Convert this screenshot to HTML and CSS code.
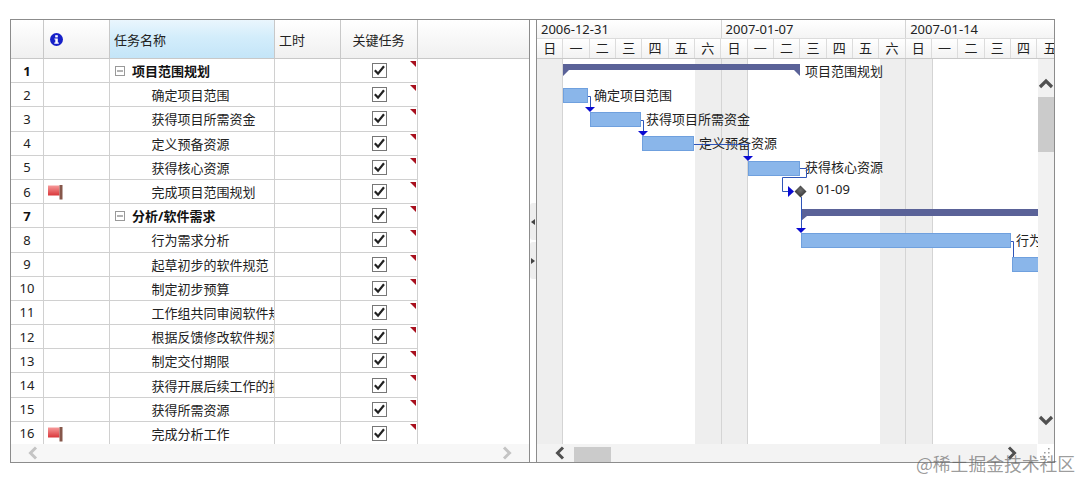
FILE: index.html
```html
<!DOCTYPE html>
<html lang="zh">
<head>
<meta charset="utf-8">
<title>甘特图</title>
<link rel="stylesheet" href="styles.css">
</head>
<body>
<svg class="defs" width="0" height="0" aria-hidden="true">
  <defs>
    <linearGradient id="flagfill" x1="0" y1="0" x2="0" y2="1"><stop offset="0" stop-color="#f79a9a"/><stop offset="1" stop-color="#d9363a"/></linearGradient>
    <radialGradient id="dia" cx="0.5" cy="0.4" r="0.6"><stop offset="0" stop-color="#707070"/><stop offset="1" stop-color="#303030"/></radialGradient>
    <symbol id="check" viewBox="0 0 15 15">
      <rect x="0.5" y="0.5" width="14" height="14" fill="#fff" stroke="#777"/>
      <path d="M2.8 7.3 6 10.6 12 3.2" fill="none" stroke="#222" stroke-width="2.2"/>
    </symbol>
    <symbol id="flag" viewBox="0 0 15 15">
      <rect x="0" y="0.5" width="11.5" height="10" fill="url(#flagfill)"/>
      <rect x="11.5" y="0" width="3" height="14.5" fill="#86574a"/>
    </symbol>
    <symbol id="minus" viewBox="0 0 10 10">
      <rect x="0.5" y="0.5" width="9" height="9" fill="#fff" stroke="#999"/>
      <path d="M2 5H8" stroke="#666"/>
    </symbol>
  </defs>
</svg>
<div class="frame">
  <section class="left">
    <div class="head">
      <div class="c num hc"></div>
      <div class="c ico hc info"><svg width="13" height="13" viewBox="0 0 13 13"><circle cx="6.5" cy="6.5" r="6.5" fill="#1620c8"/><rect x="5.2" y="2.2" width="2.6" height="2.2" fill="#fff"/><path d="M4.4 5.4H7.8V9.6H8.8V10.8H4.3V9.6H5.3V6.6H4.4Z" fill="#fff"/></svg></div>
      <div class="c name hc sel">任务名称</div>
      <div class="c hrs hc">工时</div>
      <div class="c crit hc">关键任务</div>
      <div class="hc blank"></div>
    </div>
    <div class="rows">
      <div class="row"><div class="c num b">1</div><div class="c ico"></div><div class="c name b"><svg class="tog" width="10" height="10"><use href="#minus"/></svg>项目范围规划</div><div class="c hrs"></div><div class="c crit"><svg class="cb" width="15" height="15"><use href="#check"/></svg><i class="tri"></i></div></div>
      <div class="row"><div class="c num">2</div><div class="c ico"></div><div class="c name kid">确定项目范围</div><div class="c hrs"></div><div class="c crit"><svg class="cb" width="15" height="15"><use href="#check"/></svg><i class="tri"></i></div></div>
      <div class="row"><div class="c num">3</div><div class="c ico"></div><div class="c name kid">获得项目所需资金</div><div class="c hrs"></div><div class="c crit"><svg class="cb" width="15" height="15"><use href="#check"/></svg><i class="tri"></i></div></div>
      <div class="row"><div class="c num">4</div><div class="c ico"></div><div class="c name kid">定义预备资源</div><div class="c hrs"></div><div class="c crit"><svg class="cb" width="15" height="15"><use href="#check"/></svg><i class="tri"></i></div></div>
      <div class="row"><div class="c num">5</div><div class="c ico"></div><div class="c name kid">获得核心资源</div><div class="c hrs"></div><div class="c crit"><svg class="cb" width="15" height="15"><use href="#check"/></svg><i class="tri"></i></div></div>
      <div class="row"><div class="c num">6</div><div class="c ico"><svg class="fl" width="15" height="15"><use href="#flag"/></svg></div><div class="c name kid">完成项目范围规划</div><div class="c hrs"></div><div class="c crit"><svg class="cb" width="15" height="15"><use href="#check"/></svg><i class="tri"></i></div></div>
      <div class="row"><div class="c num b">7</div><div class="c ico"></div><div class="c name b"><svg class="tog" width="10" height="10"><use href="#minus"/></svg>分析/软件需求</div><div class="c hrs"></div><div class="c crit"><svg class="cb" width="15" height="15"><use href="#check"/></svg><i class="tri"></i></div></div>
      <div class="row"><div class="c num">8</div><div class="c ico"></div><div class="c name kid">行为需求分析</div><div class="c hrs"></div><div class="c crit"><svg class="cb" width="15" height="15"><use href="#check"/></svg><i class="tri"></i></div></div>
      <div class="row"><div class="c num">9</div><div class="c ico"></div><div class="c name kid">起草初步的软件规范</div><div class="c hrs"></div><div class="c crit"><svg class="cb" width="15" height="15"><use href="#check"/></svg><i class="tri"></i></div></div>
      <div class="row"><div class="c num">10</div><div class="c ico"></div><div class="c name kid">制定初步预算</div><div class="c hrs"></div><div class="c crit"><svg class="cb" width="15" height="15"><use href="#check"/></svg><i class="tri"></i></div></div>
      <div class="row"><div class="c num">11</div><div class="c ico"></div><div class="c name kid">工作组共同审阅软件规范</div><div class="c hrs"></div><div class="c crit"><svg class="cb" width="15" height="15"><use href="#check"/></svg><i class="tri"></i></div></div>
      <div class="row"><div class="c num">12</div><div class="c ico"></div><div class="c name kid">根据反馈修改软件规范</div><div class="c hrs"></div><div class="c crit"><svg class="cb" width="15" height="15"><use href="#check"/></svg><i class="tri"></i></div></div>
      <div class="row"><div class="c num">13</div><div class="c ico"></div><div class="c name kid">制定交付期限</div><div class="c hrs"></div><div class="c crit"><svg class="cb" width="15" height="15"><use href="#check"/></svg><i class="tri"></i></div></div>
      <div class="row"><div class="c num">14</div><div class="c ico"></div><div class="c name kid">获得开展后续工作的批准</div><div class="c hrs"></div><div class="c crit"><svg class="cb" width="15" height="15"><use href="#check"/></svg><i class="tri"></i></div></div>
      <div class="row"><div class="c num">15</div><div class="c ico"></div><div class="c name kid">获得所需资源</div><div class="c hrs"></div><div class="c crit"><svg class="cb" width="15" height="15"><use href="#check"/></svg><i class="tri"></i></div></div>
      <div class="row"><div class="c num">16</div><div class="c ico"><svg class="fl" width="15" height="15"><use href="#flag"/></svg></div><div class="c name kid">完成分析工作</div><div class="c hrs"></div><div class="c crit"><svg class="cb" width="15" height="15"><use href="#check"/></svg><i class="tri"></i></div></div>
    </div>
    <div class="hbar">
      <svg width="12" height="14" viewBox="0 0 12 14"><path d="M9 1.5 3.5 7 9 12.5" fill="none" stroke="#c4c4c4" stroke-width="3"/></svg>
      <svg width="12" height="14" viewBox="0 0 12 14"><path d="M3 1.5 8.5 7 3 12.5" fill="none" stroke="#c4c4c4" stroke-width="3"/></svg>
    </div>
  </section>

  <div class="splitter">
    <div class="grip"><i class="arr-l"></i></div>
    <div class="grip"><i class="arr-r"></i></div>
  </div>

  <section class="right">
    <div class="weeks">
      <div class="week">2006-12-31</div><div class="week">2007-01-07</div><div class="week">2007-01-14</div>
    </div>
    <div class="days">
      <div class="day">日</div><div class="day">一</div><div class="day">二</div><div class="day">三</div><div class="day">四</div><div class="day">五</div><div class="day">六</div>
      <div class="day">日</div><div class="day">一</div><div class="day">二</div><div class="day">三</div><div class="day">四</div><div class="day">五</div><div class="day">六</div>
      <div class="day">日</div><div class="day">一</div><div class="day">二</div><div class="day">三</div><div class="day">四</div><div class="day">五</div>
    </div>
    <div class="gbody">
      <svg class="chart" width="501" height="385" viewBox="537 59 501 385">
        <g class="shade">
          <rect x="537" y="59" width="25.5" height="385"/>
          <rect x="695" y="59" width="52.5" height="385"/>
          <rect x="880" y="59" width="52.5" height="385"/>
        </g>
        <g class="glines">
          <path d="M562.5 59V444M721.5 59V444M747.5 59V444M905.5 59V444M932.5 59V444"/>
        </g>
        <g class="summary">
          <path d="M563 64H800V76L794 70H569L563 76Z"/>
          <path d="M801 209H1038V216H807L801 221Z"/>
        </g>
        <g class="task">
          <rect x="563.5" y="88.5" width="24" height="14"/>
          <rect x="590.5" y="112.5" width="50" height="14"/>
          <rect x="642.5" y="136.5" width="51" height="14"/>
          <rect x="748.5" y="161.5" width="51" height="14"/>
          <rect x="801.5" y="233.5" width="209" height="14"/>
          <rect x="1012.5" y="257.5" width="30" height="14"/>
        </g>
        <g class="labels">
          <text x="805" y="76">项目范围规划</text>
          <text x="594" y="100">确定项目范围</text>
          <text x="646" y="124">获得项目所需资金</text>
          <text x="699" y="148">定义预备资源</text>
          <text x="805" y="172">获得核心资源</text>
          <text x="816" y="194" class="ms">01-09</text>
          <text x="1016" y="245">行为需求分析</text>
        </g>
        <g class="links">
          <path d="M588 96.5H590.5V108"/>
          <path d="M641 120.5H643.5V132"/>
          <path d="M694 144.5H748.5V157"/>
          <path d="M800 168.5H806.5V177.5H782.5V191.5H789"/>
          <path d="M801.5 197V229"/>
          <path d="M1011 241.5H1013.5V257"/>
        </g>
        <g class="heads">
          <path d="M585 107H595L590 112Z"/>
          <path d="M638 131H648L643 136Z"/>
          <path d="M743 156H753L748 161Z"/>
          <path d="M788 186V197L794 191.5Z"/>
          <path d="M796 228H806L801 233Z"/>
        </g>
        <path class="diamond" d="M800.5 185.5 806.5 191.5 800.5 197.5 794.5 191.5Z"/>
      </svg>
      <div class="vbar">
        <svg class="up" width="16" height="12" viewBox="0 0 16 12"><path d="M2 10 8 4 14 10" fill="none" stroke="#505050" stroke-width="3.2"/></svg>
        <div class="vthumb"></div>
        <svg class="down" width="16" height="12" viewBox="0 0 16 12"><path d="M2 2 8 8 14 2" fill="none" stroke="#505050" stroke-width="3.2"/></svg>
      </div>
    </div>
    <div class="gfoot">
      <div class="gh">
        <svg width="12" height="14" viewBox="0 0 12 14"><path d="M9 1.5 3.5 7 9 12.5" fill="none" stroke="#505050" stroke-width="3"/></svg>
        <div class="hthumb"></div>
        <svg class="rt" width="12" height="14" viewBox="0 0 12 14"><path d="M3 1.5 8.5 7 3 12.5" fill="none" stroke="#505050" stroke-width="3"/></svg>
      </div>
      <div class="corner"><svg width="17" height="18" viewBox="0 0 17 18"><path d="M11 4h1.6v1.6H11zM11 8h1.6v1.6H11zM7 8h1.6v1.6H7zM11 12h1.6v1.6H11zM7 12h1.6v1.6H7zM3 12h1.6v1.6H3z" fill="#a0a0a0"/></svg></div>
    </div>
  </section>
</div>
<div class="mark">@稀土掘金技术社区</div>
</body>
</html>
```
FILE: styles.css
```css
* { box-sizing: border-box; }
html, body { margin: 0; padding: 0; }
body {
  width: 1092px;
  height: 490px;
  overflow: hidden;
  background: #fff;
  padding: 19px 0 0 10px;
  position: relative;
  font: 13px "Noto Sans", "Noto Sans CJK SC", sans-serif;
  color: #222;
}
.defs { position: absolute; }
.frame {
  display: flex;
  width: 1045px;
  height: 444px;
  border: 1px solid #8c8c8c;
}
.left {
  width: 519px;
  flex: none;
  border-right: 1px solid #8c8c8c;
  display: flex;
  flex-direction: column;
}
.head { display: flex; height: 39px; flex: none; border-bottom: 1px solid #c8c8c8; }
.rows { height: 385px; flex: none; overflow: hidden; }
.row { display: flex; height: 24.2px; }
.c {
  flex: none;
  display: flex;
  align-items: center;
  white-space: nowrap;
  overflow: hidden;
  border-right: 1px solid #d0d0d0;
  border-bottom: 1px solid #d0d0d0;
  position: relative;
}
.head .c { border-bottom: 0; border-right-color: #c8c8c8; }
.hc { background: linear-gradient(#fff, #f0f0f0); }
.blank { flex: 1; }
.num { width: 33px; justify-content: center; color: #222; }
.ico { width: 66px; }
.name { width: 165px; padding-left: 4px; }
.hrs { width: 66px; padding-left: 4px; }
.crit { width: 77px; justify-content: center; padding-right: 1px; }
.b { font-weight: 700; color: #111; }
.sel { background: linear-gradient(#eaf6fd, #d3edfb 45%, #c4e5f8); }
.kid { padding-left: 41.5px; }
.tog { margin: 0 7px 0 1px; flex: none; }
.info svg { margin: 0 0 0 6px; }
.fl { margin: 2px 0 0 4px; }
.cb { margin-left: 1px; }
.tri {
  position: absolute;
  top: 2px;
  right: 1px;
  border-top: 6px solid #a8101e;
  border-left: 6px solid transparent;
}
.hbar {
  flex: 1;
  background: #f7f7f7;
  display: flex;
  justify-content: space-between;
  align-items: center;
  padding: 0 16px;
}
.splitter {
  width: 6px;
  flex: none;
  padding-top: 183px;
  display: flex;
  flex-direction: column;
  gap: 2px;
}
.grip {
  height: 37px;
  background: #eeeeee;
  border-radius: 3px 0 0 3px;
  display: flex;
  align-items: center;
  justify-content: center;
}
.arr-l { border-right: 4px solid #444; border-top: 3.5px solid transparent; border-bottom: 3.5px solid transparent; }
.arr-r { border-left: 4px solid #444; border-top: 3.5px solid transparent; border-bottom: 3.5px solid transparent; }
.right {
  flex: 1;
  min-width: 0;
  border-left: 1px solid #8c8c8c;
  display: flex;
  flex-direction: column;
  overflow: hidden;
}
.weeks { display: flex; height: 19px; flex: none; background: linear-gradient(#fff, #f4f4f4); border-bottom: 1px solid #dcdcdc; }
.week { flex: 0 0 184.6px; padding-left: 4px; border-right: 1px solid #d4d4d4; line-height: 19px; white-space: nowrap; color: #222; }
.days { display: flex; height: 20px; flex: none; background: linear-gradient(#fff, #f2f2f2); border-bottom: 1px solid #c8c8c8; }
.day { flex: 0 0 26.33px; text-align: center; border-right: 1px solid #dcdcdc; line-height: 19px; color: #222; overflow: hidden; white-space: nowrap; }
.gbody { display: flex; height: 385px; flex: none; }
.chart { display: block; flex: none; }
.shade rect { fill: #eeeeee; }
.glines path { stroke: #d4d4d4; fill: none; }
.summary path { fill: #5a6298; }
.task rect { fill: #8ab6ea; stroke: #6fa0de; }
.labels text { font: 13px "Noto Sans CJK SC", sans-serif; fill: #222; }
.labels .ms { font-family: "Noto Sans", sans-serif; }
.links path { fill: none; stroke: #2f55b8; }
.heads path { fill: #0a0ad2; }
.diamond { fill: url(#dia); }
.vbar {
  flex: 1;
  background: #f1f1f1;
  position: relative;
}
.up { position: absolute; top: 18px; left: 0; }
.vthumb { position: absolute; top: 38px; left: 0; right: 0; height: 55px; background: #cbcbcb; }
.down { position: absolute; top: 356px; left: 0; }
.gfoot { flex: 1; display: flex; }
.gh {
  width: 500px;
  background: #f3f3f3;
  display: flex;
  align-items: center;
  padding-left: 17px;
}
.hthumb { width: 37px; height: 15px; align-self: flex-end; background: #cbcbcb; margin-left: 8px; }
.rt { margin-left: 395px; }
.corner { flex: 1; background: #fff; }
.corner svg { display: block; }
.mark {
  position: absolute;
  left: 916px;
  top: 450px;
  font: 17.8px "Noto Sans CJK SC", sans-serif;
  color: rgba(90, 90, 90, 0.62);
  white-space: nowrap;
}
```
